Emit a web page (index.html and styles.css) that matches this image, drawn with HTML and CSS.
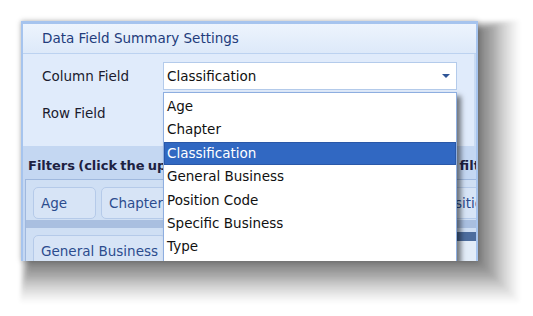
FILE: index.html
```html
<!DOCTYPE html>
<html lang="en">

<head>
  <meta charset="UTF-8">
  <meta name="viewport" content="width=device-width, initial-scale=1.0">
  <title>Data Field Summary Settings</title>
  <link rel="stylesheet" href="styles.css">
</head>

<body>
  <div class="window">
    <div class="header">Data Field Summary Settings</div>

    <div class="fields">
      <div class="field-row">
        <span class="field-label">Column Field</span>
        <div class="combo">
          <span>Classification</span>
          <span class="combo-arrow"></span>
        </div>
      </div>
      <div class="field-row">
        <span class="field-label">Row Field</span>
      </div>
    </div>

    <div class="filters">
      <div class="filters-caption">Filters (click the up and down arrows to change the order of filters)</div>
      <div class="filter-box">
        <div class="filter-row">
          <span class="chip chip-short">Age</span>
          <span class="chip chip-chapter">Chapter</span>
          <span class="chip chip-class">Classification</span>
          <span class="chip">Position Code</span>
        </div>
        <div class="row-band"></div>
        <div class="filter-row">
          <span class="chip">General Business</span>
          <span class="group-tab"></span>
        </div>
      </div>
    </div>

    <!-- open list of the Column Field combo -->
    <ul class="dropdown">
      <li>Age</li>
      <li>Chapter</li>
      <li class="selected">Classification</li>
      <li>General Business</li>
      <li>Position Code</li>
      <li>Specific Business</li>
      <li>Type</li>
    </ul>
  </div>
</body>

</html>
```

FILE: styles.css
```css
body {
  margin: 0;
  min-height: 100vh;
  background: white;
  font-family: "DejaVu Sans", Tahoma, sans-serif;
  font-size: 13.5px;
}

.window {
  position: relative;
  box-sizing: border-box;
  width: 457px;
  height: 240px;
  margin: 21px 0 0 21px;
  border: 2px solid #a6c4ee;
  border-top-width: 3px;
  border-bottom: none;
  background: #dfeafb;
  overflow: hidden;
  /* stacked layers make the wide soft drop shadow */
  box-shadow:
    0 0 6px rgba(0, 0, 0, 0.2),
    5px 5px 4px -3px rgba(0, 0, 0, 0.09),
    7px 7px 4px 0 rgba(0, 0, 0, 0.09),
    9px 9px 4px 3px rgba(0, 0, 0, 0.09),
    11px 11px 4px 6px rgba(0, 0, 0, 0.09),
    12px 12px 4px 9px rgba(0, 0, 0, 0.08),
    14px 14px 4px 12px rgba(0, 0, 0, 0.07),
    16px 16px 4px 15px rgba(0, 0, 0, 0.06),
    18px 18px 4px 18px rgba(0, 0, 0, 0.05),
    20px 20px 4px 21px rgba(0, 0, 0, 0.04);
}

.header {
  height: 29px;
  line-height: 28px;
  padding-left: 19px;
  color: #233c7c;
  background: linear-gradient(#edf4fd, #dde9f9);
  border-bottom: 1px solid #bcd2f0;
}

.fields {
  padding: 8px 0 19px 19px;
  background: #e0ebfb;
  border-right: 2px solid #c9dbf3;
}

.field-row {
  display: flex;
  align-items: center;
  height: 28px;
  color: #1b1b2e;
}

.field-row + .field-row {
  margin-top: 9px;
}

.field-label {
  width: 121px;
}

.combo {
  box-sizing: border-box;
  display: flex;
  align-items: center;
  justify-content: space-between;
  width: 294px;
  height: 28px;
  padding: 0 6px 0 3px;
  background: white;
  border: 1px solid #b4cbeb;
  color: #111;
}

.combo-arrow {
  width: 0;
  height: 0;
  border-left: 4px solid transparent;
  border-right: 4px solid transparent;
  border-top: 4px solid #2e5597;
}

.filters {
  height: 120px;
  background: #c4d7f2;
}

.filters-caption {
  padding: 9px 0 0 5px;
  line-height: 22px;
  font-weight: bold;
  font-size: 13px;
  word-spacing: -1.3px;
  color: #1d2142;
  white-space: nowrap;
}

.filter-box {
  margin: 2px 0 0 2px;
  border: 1px solid #9fb8de;
  border-right: none;
  background: #cfdff4;
}

.filter-row {
  display: flex;
  gap: 5px;
  padding: 7px 0 0 7px;
}

.row-band {
  height: 8px;
  margin-top: 1px;
  background: #a9bfe0;
}

.chip {
  flex: none;
  box-sizing: border-box;
  height: 32px;
  line-height: 30px;
  padding: 0 7px;
  background: #d7e4f6;
  border: 1px solid #b5cae9;
  border-radius: 5px;
  color: #2c4c8e;
  white-space: nowrap;
}

.chip-short {
  width: 63px;
}

.chip-chapter {
  width: 155px;
}

.chip-class {
  width: 165px;
}

.group-tab {
  margin-left: auto;
  width: 200px;
  height: 30px;
  background: #e2ecf8;
  border-top: 9px solid #4d6d9e;
  margin-top: -3px;
}

.dropdown {
  position: absolute;
  left: 140px;
  top: 68px;
  width: 294px;
  box-sizing: border-box;
  margin: 0;
  padding: 2px 0 4px;
  list-style: none;
  background: white;
  border: 1px solid #8eaee0;
  box-shadow: 4px 4px 5px rgba(0, 0, 0, 0.5);
}

.dropdown li {
  box-sizing: border-box;
  height: 23.4px;
  line-height: 23px;
  padding-left: 3px;
  color: #111;
}

.dropdown li.selected {
  background: #3168c2;
  border: 1px solid #2a58a8;
  padding-left: 2px;
  line-height: 21px;
  color: white;
}
```
